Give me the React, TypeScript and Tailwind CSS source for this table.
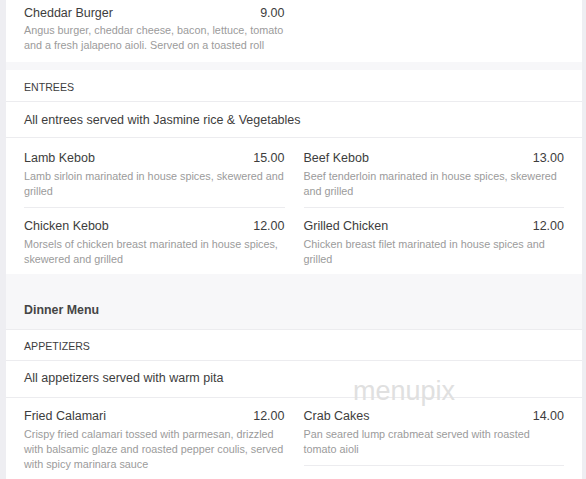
type Item = { name: string; price: string; desc: string };

const burger: Item = {
  name: "Cheddar Burger",
  price: "9.00",
  desc: "Angus burger, cheddar cheese, bacon, lettuce, tomato and a fresh jalapeno aioli. Served on a toasted roll",
};

const entrees: Item[][] = [
  [
    { name: "Lamb Kebob", price: "15.00", desc: "Lamb sirloin marinated in house spices, skewered and grilled" },
    { name: "Chicken Kebob", price: "12.00", desc: "Morsels of chicken breast marinated in house spices, skewered and grilled" },
  ],
  [
    { name: "Beef Kebob", price: "13.00", desc: "Beef tenderloin marinated in house spices, skewered and grilled" },
    { name: "Grilled Chicken", price: "12.00", desc: "Chicken breast filet marinated in house spices and grilled" },
  ],
];

const appetizers: Item[][] = [
  [
    {
      name: "Fried Calamari",
      price: "12.00",
      desc: "Crispy fried calamari tossed with parmesan, drizzled with balsamic glaze and roasted pepper coulis, served with spicy marinara sauce",
    },
  ],
  [
    { name: "Crab Cakes", price: "14.00", desc: "Pan seared lump crabmeat served with roasted tomato aioli" },
    { name: "Tortellini", price: "9.00", desc: "Cheese tortellini in a light cream sauce" },
  ],
];

function MenuItem({ item, last }: { item: Item; last: boolean }) {
  return (
    <div className={last ? "pt-[9px] pb-[7px]" : "pt-[9px] pb-[8px] border-b border-[#ececef]"}>
      <div className="flex justify-between text-[12.5px] leading-[18px] text-[#3d3d3d]">
        <span>{item.name}</span>
        <span>{item.price}</span>
      </div>
      <p className="mt-[2px] text-[10.8px] leading-[15px] text-[#9b9b9b]">{item.desc}</p>
    </div>
  );
}

function Columns({ cols, pad }: { cols: Item[][]; pad: string }) {
  return (
    <div className={`grid grid-cols-2 gap-x-[19px] px-[18px] ${pad}`}>
      {cols.map((col, i) => (
        <div key={i} className="flex flex-col">
          {col.map((item, j) => (
            <MenuItem key={item.name} item={item} last={j === col.length - 1} />
          ))}
        </div>
      ))}
    </div>
  );
}

function SectionHead({ title, note, h, noteCls }: { title: string; note: string; h: string; noteCls: string }) {
  return (
    <>
      <div className={`flex ${h} items-center border-b border-[#ececef] px-[18px] pt-[4px] text-[10.6px] text-[#3d3d3d]`}>
        {title}
      </div>
      <div className={`flex items-center border-b border-[#ececef] px-[18px] text-[12.5px] text-[#3d3d3d] ${noteCls}`}>
        {note}
      </div>
    </>
  );
}

export default function App() {
  return (
    <div className="relative h-[479px] w-[586px] overflow-hidden bg-[#eeeef2] font-['Liberation_Sans',Arial,sans-serif]">
      <div className="ml-[6px] flex w-[576px] flex-col bg-[#f7f7f9]">
        <div className="bg-white px-[18px] pb-[9px]">
          <div className="grid grid-cols-2 gap-x-[19px]">
            <div className="pt-[4px]">
              <div className="flex justify-between text-[12.5px] leading-[18px] text-[#3d3d3d]">
                <span>{burger.name}</span>
                <span>{burger.price}</span>
              </div>
              <p className="mt-[1px] text-[10.8px] leading-[15px] text-[#9b9b9b]">{burger.desc}</p>
            </div>
          </div>
        </div>

        <div className="h-[8px]" />

        <div className="bg-white">
          <SectionHead
            h="h-[32px]"
            noteCls="h-[36px] pt-[2px]"
            title="ENTREES"
            note="All entrees served with Jasmine rice & Vegetables"
          />
          <Columns cols={entrees} pad="pt-[2px]" />
        </div>

        <div className="h-[56px] border-b border-[#ececef] px-[18px] pt-[27px] text-[12.4px] font-bold leading-[18px] text-[#454545]">
          Dinner Menu
        </div>

        <div className="bg-white">
          <SectionHead
            h="h-[31px]"
            noteCls="h-[37px] pb-[2px]"
            title="APPETIZERS"
            note="All appetizers served with warm pita"
          />
          <Columns cols={appetizers} pad="pt-0" />
        </div>
      </div>

      <span className="pointer-events-none absolute left-[353px] top-[378px] text-[27px] leading-[27px] text-[#e0e0e0]">
        menupix
      </span>
    </div>
  );
}
